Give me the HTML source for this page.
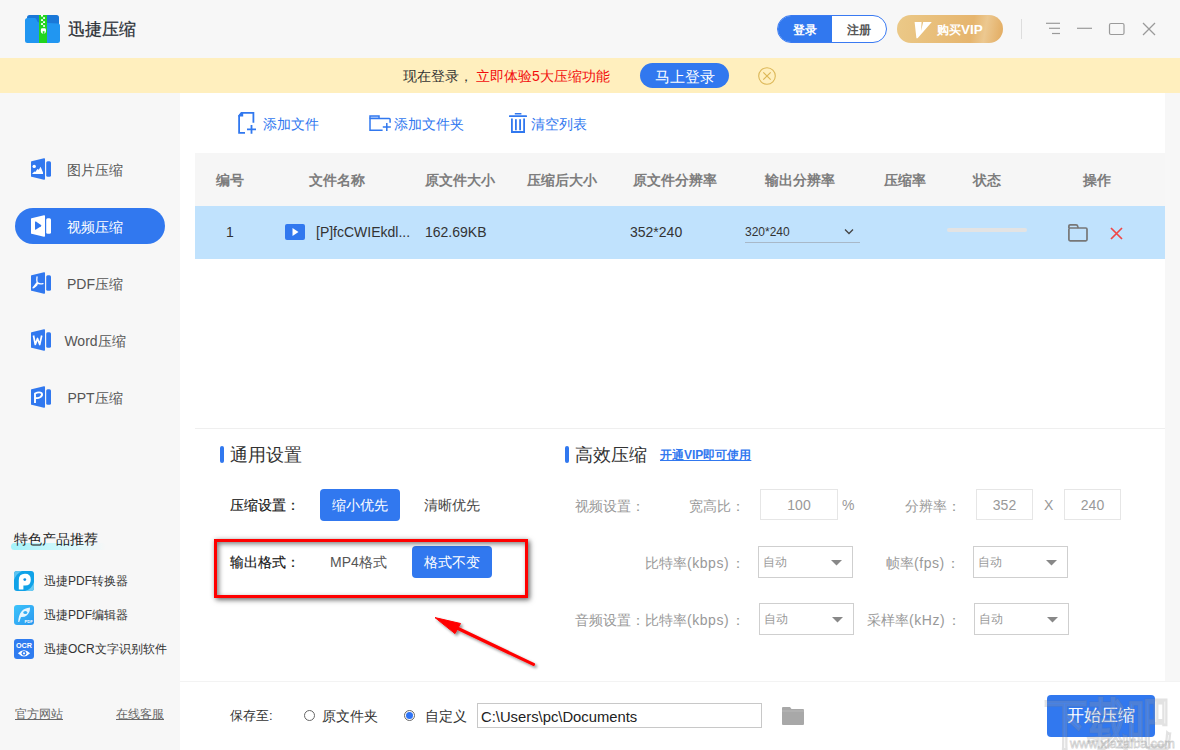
<!DOCTYPE html>
<html><head><meta charset="utf-8">
<style>
*{box-sizing:border-box;margin:0;padding:0}
html,body{width:1180px;height:750px;overflow:hidden;background:#fff;font-family:"Liberation Sans",sans-serif;}
.a{position:absolute}
.t{position:absolute;white-space:nowrap;line-height:20px;height:20px}
.c{text-align:center}
svg{position:absolute;overflow:visible}
</style></head><body>
<!-- header -->
<div class="a" style="left:0;top:0;width:1180px;height:58px;background:#f7f7f7"></div>
<div class="a" style="left:0;top:58px;width:1180px;height:35px;background:#ffefbe"></div>
<div class="a" style="left:0;top:93px;width:180px;height:657px;background:#f7f7f7"></div>
<div class="a" style="left:1165px;top:93px;width:15px;height:588px;background:#f7f7f7"></div>

<!-- logo -->
<svg style="left:25px;top:15px" width="35" height="28" viewBox="0 0 35 28">
  <rect x="2" y="0" width="32" height="11" rx="2.5" fill="#1a78d8"/>
  <path d="M0 5.5 Q0 3 2.5 3 L9.5 3 Q10.8 3 11.4 4.2 L12.4 6.4 Q13 7.3 14.2 7.4 L33 8.4 Q35 8.5 35 10.5 L35 25.5 Q35 28 32.5 28 L2.5 28 Q0 28 0 25.5 Z" fill="#2196f1"/>
  <rect x="14" y="0" width="8" height="28" fill="#22d420"/>
  <g fill="#fff"><rect x="16" y="0" width="2" height="1.6"/><rect x="18.1" y="2.2" width="1.9" height="1.7"/><rect x="16" y="4.3" width="2" height="1.6"/><rect x="18.1" y="6.3" width="1.9" height="1.7"/><rect x="16" y="8.2" width="2" height="1.7"/><rect x="18.1" y="10.2" width="1.9" height="1.6"/></g>
  <path d="M16.6 13.2 L20.2 13.2 Q21 13.4 21 15.5 Q21 18.8 18.4 18.8 Q15.8 18.8 15.8 15.5 Q15.8 13.4 16.6 13.2Z" fill="#fff"/>
  <path d="M17.6 16.2 L19.6 16.2 L19.2 18.8 L18 18.8Z" fill="#22d420"/>
</svg>
<div class="t" style="left:68px;top:18.5px;font-size:17px;line-height:22px;height:22px;color:#2a2f36;-webkit-text-stroke:0.25px #2a2f36">迅捷压缩</div>

<!-- login pill -->
<div class="a" style="left:777px;top:15px;width:110px;height:28px;border-radius:14px;border:1px solid #3a7af2;background:#fff;overflow:hidden">
  <div class="a" style="left:0;top:0;width:54px;height:26px;background:#3178ef"></div>
</div>
<div class="t c" style="left:777px;top:20px;width:56px;font-size:12px;color:#fff;font-weight:bold">登录</div>
<div class="t c" style="left:832px;top:20px;width:53px;font-size:12px;color:#555;font-weight:bold">注册</div>
<!-- VIP pill -->
<div class="a" style="left:897px;top:15px;width:106px;height:28px;border-radius:14px;background:linear-gradient(100deg,#ebc988 0%,#e6b56e 70%,#ecc890 82%,#e2aa5e 100%)"></div>
<svg style="left:914px;top:22px" width="18" height="17" viewBox="0 0 18 17"><path d="M0.6 0 L7.6 0 L7 9 L9.2 0 L17.8 0 L3.6 16.2 L2.4 16.2 Z" fill="#fff"/></svg>
<div class="t" style="left:937px;top:20px;font-size:12px;color:#fff;font-weight:bold">购买<span style="font-size:13.5px">VIP</span></div>
<!-- divider & window controls -->
<div class="a" style="left:1021px;top:19px;width:1px;height:20px;background:#ddd"></div>
<svg style="left:1040px;top:15px" width="130" height="28" viewBox="0 0 130 28">
  <g stroke="#9a9a9a" stroke-width="1.2" fill="none">
    <line x1="6" y1="8.3" x2="20" y2="8.3"/><line x1="9" y1="13.3" x2="20" y2="13.3"/><line x1="12" y1="18.5" x2="20" y2="18.5"/>
    <line x1="37" y1="13.3" x2="52" y2="13.3"/>
    <rect x="69.5" y="8.5" width="14.5" height="11" rx="1.5"/>
    <line x1="103" y1="8" x2="115" y2="20"/><line x1="115" y1="8" x2="103" y2="20"/>
  </g>
</svg>

<!-- notice -->
<div class="t" style="left:403px;top:66px;font-size:14px;color:#333">现在登录，</div>
<div class="t" style="left:476px;top:66px;font-size:14px;color:#f20c0c">立即体验5大压缩功能</div>
<div class="a" style="left:640px;top:63px;width:89px;height:25px;border-radius:12.5px;background:#3178ef"></div>
<div class="t c" style="left:640px;top:66.5px;width:89px;font-size:15px;color:#fff">马上登录</div>
<svg style="left:758px;top:67px" width="18" height="18" viewBox="0 0 18 18"><circle cx="9" cy="9" r="8.3" fill="none" stroke="#dcb757" stroke-width="1.1"/><path d="M5.3 5.3 L12.7 12.7 M12.7 5.3 L5.3 12.7" stroke="#dcb757" stroke-width="1.2"/></svg>


<!-- sidebar -->
<div class="a" style="left:15px;top:208px;width:150px;height:36px;border-radius:18px;background:#3178ef"></div>
<svg style="left:31px;top:158px" width="20" height="22" viewBox="0 0 20 22">
  <path d="M0.5 3.2 L13 0.3 Q14 0.1 14 1 L14 21 Q14 21.9 13 21.7 L0.5 18.8 Q0 18.7 0 18.2 L0 3.8 Q0 3.3 0.5 3.2Z" fill="#3178ef"/>
  <rect x="15.2" y="3.2" width="4.8" height="15.6" rx="1.5" fill="#3178ef"/>
  <circle cx="3.2" cy="8.4" r="1.7" fill="#fff"/>
  <path d="M1 15.9 L3.3 13.6 L4.3 14 L6.4 11.1 L7.8 11.8 L9.6 8.8 L12 14.4 L12 15.9 Z" fill="#fff"/>
</svg>
<svg style="left:31px;top:215px" width="20" height="22" viewBox="0 0 20 22">
  <path d="M0.5 3.2 L13 0.3 Q14 0.1 14 1 L14 21 Q14 21.9 13 21.7 L0.5 18.8 Q0 18.7 0 18.2 L0 3.8 Q0 3.3 0.5 3.2Z" fill="#fff"/>
  <rect x="15.2" y="3.2" width="4.8" height="15.6" rx="1.5" fill="#fff"/>
  <path d="M4 7 Q4 6 5 6.6 L10 10 Q10.8 10.6 10 11.2 L5 14.5 Q4 15.1 4 14 Z" fill="#3178ef"/>
</svg>
<svg style="left:31px;top:272px" width="20" height="22" viewBox="0 0 20 22">
  <path d="M0.5 3.2 L13 0.3 Q14 0.1 14 1 L14 21 Q14 21.9 13 21.7 L0.5 18.8 Q0 18.7 0 18.2 L0 3.8 Q0 3.3 0.5 3.2Z" fill="#3178ef"/>
  <rect x="15.2" y="3.2" width="4.8" height="15.6" rx="1.5" fill="#3178ef"/>
  <path d="M6 5 Q5.5 8 6.2 10.5 L2 15.8 M6.2 10.5 Q8 12.5 12 11.6 M6.2 10.5 Q7 13 3 15.5" stroke="#fff" stroke-width="1.3" fill="none" stroke-linecap="round"/>
</svg>
<svg style="left:31px;top:329px" width="20" height="22" viewBox="0 0 20 22">
  <path d="M0.5 3.2 L13 0.3 Q14 0.1 14 1 L14 21 Q14 21.9 13 21.7 L0.5 18.8 Q0 18.7 0 18.2 L0 3.8 Q0 3.3 0.5 3.2Z" fill="#3178ef"/>
  <rect x="15.2" y="3.2" width="4.8" height="15.6" rx="1.5" fill="#3178ef"/>
  <path d="M2.5 6.5 L4.3 15.5 L6.5 9.5 L8.7 15.5 L10.7 6.5" stroke="#fff" stroke-width="1.7" fill="none" stroke-linejoin="round"/>
</svg>
<svg style="left:31px;top:386px" width="20" height="22" viewBox="0 0 20 22">
  <path d="M0.5 3.2 L13 0.3 Q14 0.1 14 1 L14 21 Q14 21.9 13 21.7 L0.5 18.8 Q0 18.7 0 18.2 L0 3.8 Q0 3.3 0.5 3.2Z" fill="#3178ef"/>
  <rect x="15.2" y="3.2" width="4.8" height="15.6" rx="1.5" fill="#3178ef"/>
  <path d="M4 17 L4 7.5 Q8 5.5 10.5 7 Q12 9 9.5 11 Q7 12.5 5 12" stroke="#fff" stroke-width="1.9" fill="none" stroke-linejoin="round"/>
</svg>
<div class="t c" style="left:45px;top:160px;width:100px;font-size:14px;color:#555">图片压缩</div>
<div class="t c" style="left:45px;top:217px;width:100px;font-size:14px;color:#fff">视频压缩</div>
<div class="t c" style="left:45px;top:274px;width:100px;font-size:14px;color:#555">PDF压缩</div>
<div class="t c" style="left:45px;top:331px;width:100px;font-size:14px;color:#555">Word压缩</div>
<div class="t c" style="left:45px;top:388px;width:100px;font-size:14px;color:#555">PPT压缩</div>

<div class="a" style="left:11px;top:543px;width:95px;height:7px;border-radius:3.5px;background:linear-gradient(90deg,#a4f3fb,rgba(200,250,255,0.5) 70%,rgba(247,247,247,0))"></div>
<div class="t" style="left:14px;top:529px;font-size:14px;color:#222">特色产品推荐</div>
<svg style="left:14px;top:571px" width="20" height="20" viewBox="0 0 20 20">
  <rect width="20" height="20" rx="3" fill="#10a2e8"/>
  <path d="M0 3 Q0 0 3 0 L8 0 Q2 3 0 9 Z" fill="#5cc3f0"/>
  <path d="M20 11 Q18 18 11 20 L17 20 Q20 20 20 17 Z" fill="#6ccbf2"/>
  <path d="M4.8 18.6 L4.8 9 Q4.8 2.8 11 2.8 Q16.8 2.8 16.8 8.7 Q16.8 14.6 11 14.6 L9.4 14.6 L9.4 18.6 Z" fill="#fff"/>
  <circle cx="10.8" cy="8.6" r="1.4" fill="#0f8fe2"/>
</svg>
<svg style="left:14px;top:605px" width="20" height="20" viewBox="0 0 20 20">
  <defs><linearGradient id="pe" x1="0" y1="0" x2="1" y2="1"><stop offset="0" stop-color="#3cc4fb"/><stop offset="1" stop-color="#2b98ef"/></linearGradient></defs>
  <rect width="20" height="20" rx="3" fill="url(#pe)"/>
  <path d="M4.2 17 Q4.5 10 7.5 6.5 Q10.5 3 16 2.6 Q16.2 7.5 13 10.2 Q10.5 12.3 7 12 L5.2 17 Z" fill="#fff" opacity="0.88"/>
  <ellipse cx="11.3" cy="7.4" rx="2" ry="1.5" fill="#34aef4"/>
  <text x="10.5" y="17.5" font-size="4.2" fill="#fff" font-family="Liberation Sans" font-weight="bold">PDF</text>
</svg>
<svg style="left:14px;top:639px" width="20" height="20" viewBox="0 0 20 20">
  <rect width="20" height="20" rx="3" fill="#2f7cf0"/>
  <text x="10" y="8.6" font-size="6.6" fill="#fff" font-family="Liberation Sans" font-weight="bold" text-anchor="middle" textLength="16" lengthAdjust="spacingAndGlyphs">OCR</text>
  <path d="M3.9 14.3 Q10 8 16.1 14.3 Q10 20.6 3.9 14.3Z" fill="#fff"/>
  <circle cx="10" cy="14.3" r="2.4" fill="#2f7cf0"/><circle cx="10" cy="14.3" r="1.1" fill="#fff"/>
</svg>
<div class="t" style="left:44px;top:570.5px;font-size:12px;color:#333">迅捷PDF转换器</div>
<div class="t" style="left:44px;top:604.5px;font-size:12px;color:#333">迅捷PDF编辑器</div>
<div class="t" style="left:44px;top:638.5px;font-size:12px;color:#333">迅捷OCR文字识别软件</div>
<div class="t" style="left:15px;top:704px;font-size:12px;color:#666;text-decoration:underline">官方网站</div>
<div class="t" style="left:116px;top:704px;font-size:12px;color:#666;text-decoration:underline">在线客服</div>

<!-- toolbar -->
<svg style="left:237px;top:112px" width="20" height="23" viewBox="0 0 20 23">
  <path d="M8 20.9 L2.1 20.9 L2.1 4 L4.6 0.9 L16.4 0.9 L16.4 10.8" fill="none" stroke="#3178ef" stroke-width="1.8"/>
  <path d="M1.2 3.6 L4.2 0 L6.2 0 L6.2 4.6 L1.2 4.6 Z" fill="#3178ef"/>
  <path d="M10 17.3 L19 17.3 M14.5 13 L14.5 21.8" stroke="#3178ef" stroke-width="1.8"/>
</svg>
<div class="t" style="left:263px;top:114px;font-size:14px;color:#3178ef">添加文件</div>
<svg style="left:368px;top:114px" width="24" height="18" viewBox="0 0 24 18">
  <rect x="2.7" y="2.5" width="7.6" height="1.5" fill="#b9d0f9"/>
  <path d="M2 4.5 L2 1.9 L11 1.9 L11 4.5" fill="none" stroke="#3178ef" stroke-width="1.5"/>
  <path d="M14.6 16.3 L2 16.3 L2 4.5 L21.3 4.5 Q22.1 4.5 22.1 5.3 L22.1 8.8" fill="none" stroke="#3178ef" stroke-width="1.5"/>
  <path d="M14.8 13.1 L22.8 13.1 M18.8 9 L18.8 17" stroke="#3178ef" stroke-width="1.5"/>
</svg>
<div class="t" style="left:394px;top:114px;font-size:14px;color:#3178ef">添加文件夹</div>
<svg style="left:508px;top:112px" width="20" height="22" viewBox="0 0 20 22">
  <rect x="6.8" y="1" width="6.6" height="1.5" fill="#3178ef"/>
  <rect x="1" y="3.2" width="18" height="1.8" rx="0.6" fill="#3178ef"/>
  <path d="M3.9 6.4 L3.9 20 L16.1 20 L16.1 6.4" fill="none" stroke="#3178ef" stroke-width="1.8"/>
  <path d="M7.9 7.2 L7.9 18.2 M12.1 7.2 L12.1 18.2" stroke="#3178ef" stroke-width="1.8"/>
</svg>
<div class="t" style="left:531px;top:114px;font-size:14px;color:#3178ef">清空列表</div>

<!-- table -->
<div class="a" style="left:195px;top:153px;width:970px;height:53px;background:#f6f6f6"></div>
<div class="a" style="left:195px;top:206px;width:970px;height:53px;background:#c0e2fd"></div>
<div class="t c" style="left:180px;top:170px;width:100px;font-size:14px;color:#7d7d7d;font-weight:bold">编号</div>
<div class="t c" style="left:287px;top:170px;width:100px;font-size:14px;color:#7d7d7d;font-weight:bold">文件名称</div>
<div class="t c" style="left:410px;top:170px;width:100px;font-size:14px;color:#7d7d7d;font-weight:bold">原文件大小</div>
<div class="t c" style="left:512px;top:170px;width:100px;font-size:14px;color:#7d7d7d;font-weight:bold">压缩后大小</div>
<div class="t c" style="left:625px;top:170px;width:100px;font-size:14px;color:#7d7d7d;font-weight:bold">原文件分辨率</div>
<div class="t c" style="left:750px;top:170px;width:100px;font-size:14px;color:#7d7d7d;font-weight:bold">输出分辨率</div>
<div class="t c" style="left:855px;top:170px;width:100px;font-size:14px;color:#7d7d7d;font-weight:bold">压缩率</div>
<div class="t c" style="left:937px;top:170px;width:100px;font-size:14px;color:#7d7d7d;font-weight:bold">状态</div>
<div class="t c" style="left:1047px;top:170px;width:100px;font-size:14px;color:#7d7d7d;font-weight:bold">操作</div>

<div class="t" style="left:226px;top:222px;font-size:14px;color:#333">1</div>
<svg style="left:285px;top:224px" width="20" height="16" viewBox="0 0 20 16"><rect width="20" height="16" rx="2" fill="#3178ef"/><path d="M7.5 4 L13.5 8 L7.5 12 Z" fill="#fff"/></svg>
<div class="t" style="left:316px;top:222px;font-size:14px;color:#333">[P]fcCWIEkdl...</div>
<div class="t" style="left:425px;top:222px;font-size:14px;color:#333">162.69KB</div>
<div class="t" style="left:630px;top:222px;font-size:14px;color:#333">352*240</div>
<div class="t" style="left:745px;top:222px;font-size:12px;color:#333">320*240</div>
<div class="a" style="left:745px;top:242px;width:115px;height:1px;background:#a8b8c8"></div>
<svg style="left:844px;top:228px" width="10" height="7" viewBox="0 0 10 7"><path d="M1 1.5 L5 5.5 L9 1.5" fill="none" stroke="#444" stroke-width="1.3"/></svg>
<div class="a" style="left:947px;top:228px;width:80px;height:4px;border-radius:2px;background:#e3e3e3"></div>
<svg style="left:1068px;top:224px" width="21" height="18" viewBox="0 0 21 18"><rect x="0.9" y="4" width="18.1" height="12.8" rx="1.2" fill="none" stroke="#777" stroke-width="1.7"/><path d="M0.9 4 L0.9 2.2 Q0.9 0.9 2.2 0.9 L8 0.9 Q9.5 0.9 9.8 2.5 L10.2 4" fill="none" stroke="#777" stroke-width="1.7"/></svg>
<svg style="left:1110px;top:227px" width="13" height="13" viewBox="0 0 13 13"><path d="M1 1 L12 12 M12 1 L1 12" stroke="#f04646" stroke-width="1.7"/></svg>

<div class="a" style="left:195px;top:428px;width:970px;height:1px;background:#efefef"></div>
<div class="a" style="left:180px;top:681px;width:1000px;height:1px;background:#f3f3f3"></div>

<!-- general settings -->
<div class="a" style="left:220px;top:446px;width:4px;height:17px;border-radius:2px;background:#3178ef"></div>
<div class="t" style="left:230px;top:443px;font-size:18px;line-height:24px;height:24px;color:#333">通用设置</div>
<div class="t" style="left:230px;top:495px;font-size:14px;color:#151515;-webkit-text-stroke:0.15px #151515">压缩设置：</div>
<div class="a" style="left:320px;top:489px;width:80px;height:32px;border-radius:4px;background:#3178ef"></div>
<div class="t c" style="left:320px;top:495px;width:80px;font-size:14px;color:#fff">缩小优先</div>
<div class="t" style="left:424px;top:495px;font-size:14px;color:#444">清晰优先</div>
<div class="t" style="left:230px;top:552px;font-size:14px;color:#151515;-webkit-text-stroke:0.15px #151515">输出格式：</div>
<div class="t" style="left:330px;top:552px;font-size:14px;color:#555">MP4格式</div>
<div class="a" style="left:412px;top:546px;width:80px;height:32px;border-radius:4px;background:#3178ef"></div>
<div class="t c" style="left:412px;top:552px;width:80px;font-size:14px;color:#fff">格式不变</div>

<!-- red annotation -->
<div class="a" style="left:214px;top:539px;width:314px;height:59px;border:3px solid #ff0000;box-shadow:2px 2px 5px rgba(0,0,0,0.55), 0 0 5px rgba(0,0,0,0.12), inset 2px 2px 5px rgba(0,0,0,0.5)"></div>
<svg style="left:0;top:0" width="1180" height="750" viewBox="0 0 1180 750">
  <defs><filter id="sh" x="-20%" y="-20%" width="140%" height="140%"><feGaussianBlur in="SourceAlpha" stdDeviation="1.8"/><feOffset dx="2" dy="2"/><feComponentTransfer><feFuncA type="linear" slope="0.45"/></feComponentTransfer><feMerge><feMergeNode/><feMergeNode in="SourceGraphic"/></feMerge></filter></defs>
  <g filter="url(#sh)">
    <path d="M457 628 L533.5 664.4" stroke="#ff0000" stroke-width="3.2" stroke-linecap="round"/>
    <path d="M435 617.6 L460.5 623.5 L455 633.6 Z" fill="#ff0000" stroke="#ff0000" stroke-width="1" stroke-linejoin="round"/>
  </g>
</svg>

<!-- advanced -->
<div class="a" style="left:565px;top:446px;width:4px;height:17px;border-radius:2px;background:#3178ef"></div>
<div class="t" style="left:575px;top:443px;font-size:18px;line-height:24px;height:24px;color:#333">高效压缩</div>
<div class="t" style="left:660px;top:445px;font-size:12px;color:#3178ef;font-weight:bold;text-decoration:underline">开通VIP即可使用</div>
<div class="t" style="left:575px;top:496px;font-size:14px;color:#999">视频设置：</div>
<div class="t" style="left:689px;top:496px;font-size:14px;color:#999">宽高比：</div>
<div class="a" style="left:760px;top:489px;width:78px;height:31px;border:1px solid #e6e6e6"></div>
<div class="t c" style="left:760px;top:495px;width:78px;font-size:14px;color:#999">100</div>
<div class="t" style="left:842px;top:495px;font-size:14px;color:#999">%</div>
<div class="t" style="left:905px;top:496px;font-size:14px;color:#999">分辨率：</div>
<div class="a" style="left:976px;top:489px;width:57px;height:31px;border:1px solid #e6e6e6"></div>
<div class="t c" style="left:976px;top:495px;width:57px;font-size:14px;color:#999">352</div>
<div class="t" style="left:1044px;top:495px;font-size:14px;color:#999">X</div>
<div class="a" style="left:1064px;top:489px;width:57px;height:31px;border:1px solid #e6e6e6"></div>
<div class="t c" style="left:1064px;top:495px;width:57px;font-size:14px;color:#999">240</div>

<div class="t" style="left:645px;top:553px;font-size:14px;color:#999">比特率<span style="letter-spacing:0.55px">(kbps)</span><span style="margin-left:1.5px">：</span></div>
<div class="t" style="left:886px;top:553px;font-size:14px;color:#999">帧率<span style="letter-spacing:0.55px">(fps)</span><span style="margin-left:1.5px">：</span></div>
<div class="t" style="left:575px;top:610px;font-size:14px;color:#999">音频设置：比特率<span style="letter-spacing:0.55px">(kbps)</span><span style="margin-left:1.5px">：</span></div>
<div class="t" style="left:867px;top:610px;font-size:14px;color:#999">采样率<span style="letter-spacing:0.55px">(kHz)</span><span style="margin-left:1.5px">：</span></div>
<div class="a" style="left:758px;top:546px;width:95px;height:32px;border:1px solid #cfcfcf;background:#fff"></div>
<div class="t" style="left:763px;top:552px;font-size:12px;color:#999">自动</div>
<svg style="left:831px;top:560px" width="11" height="6" viewBox="0 0 11 6"><path d="M0 0 L11 0 L5.5 5.5 Z" fill="#888"/></svg>
<div class="a" style="left:973px;top:546px;width:95px;height:32px;border:1px solid #cfcfcf;background:#fff"></div>
<div class="t" style="left:978px;top:552px;font-size:12px;color:#999">自动</div>
<svg style="left:1046px;top:560px" width="11" height="6" viewBox="0 0 11 6"><path d="M0 0 L11 0 L5.5 5.5 Z" fill="#888"/></svg>
<div class="a" style="left:759px;top:603px;width:95px;height:32px;border:1px solid #cfcfcf;background:#fff"></div>
<div class="t" style="left:764px;top:609px;font-size:12px;color:#999">自动</div>
<svg style="left:832px;top:617px" width="11" height="6" viewBox="0 0 11 6"><path d="M0 0 L11 0 L5.5 5.5 Z" fill="#888"/></svg>
<div class="a" style="left:974px;top:603px;width:95px;height:32px;border:1px solid #cfcfcf;background:#fff"></div>
<div class="t" style="left:979px;top:609px;font-size:12px;color:#999">自动</div>
<svg style="left:1047px;top:617px" width="11" height="6" viewBox="0 0 11 6"><path d="M0 0 L11 0 L5.5 5.5 Z" fill="#888"/></svg>

<!-- bottom bar -->
<div class="t" style="left:230px;top:706px;font-size:13px;color:#333">保存至:</div>
<div class="a" style="left:304px;top:710px;width:11px;height:11px;border-radius:50%;border:1px solid #666;background:#fff"></div>
<div class="t" style="left:322px;top:706px;font-size:14px;color:#333">原文件夹</div>
<div class="a" style="left:404px;top:710px;width:11px;height:11px;border-radius:50%;border:1px solid #666;background:#fff"></div>
<div class="a" style="left:406px;top:712px;width:7px;height:7px;border-radius:50%;background:#2f74f5"></div>
<div class="t" style="left:425px;top:706px;font-size:14px;color:#333">自定义</div>
<div class="a" style="left:477px;top:703px;width:285px;height:25px;border:1px solid #c8c8c8;background:#fff"></div>
<div class="t" style="left:481px;top:706.5px;font-size:14.8px;color:#222">C:\Users\pc\Documents</div>
<svg style="left:782px;top:707px" width="22" height="18" viewBox="0 0 22 18"><path d="M0 1 Q0 0 1 0 L8 0 L9.5 2 L21 2 Q22 2 22 3 L22 17 Q22 18 21 18 L1 18 Q0 18 0 17 Z" fill="#a8a8a8"/><path d="M0 4 L22 4" stroke="#bdbdbd" stroke-width="0.8"/></svg>
<div class="a" style="left:1047px;top:695px;width:108px;height:42px;border-radius:4px;background:#3178ef"></div>
<div class="t c" style="left:1047px;top:706px;width:108px;font-size:17px;color:#fff">开始压缩</div>

<!-- watermark -->
<svg style="left:1040px;top:685px" width="140" height="65" viewBox="0 0 140 65">
  <g transform="translate(5,58) scale(0.93,1.2)">
    <text x="0" y="0" font-family="Liberation Sans" font-size="46" font-weight="bold" fill="rgba(255,255,255,0.1)" stroke="rgba(110,110,110,0.2)" stroke-width="1" letter-spacing="-1">下载吧</text>
  </g>
  <text x="30" y="63" font-family="Liberation Sans" font-size="13" fill="rgba(255,255,255,0.2)" stroke="rgba(120,120,120,0.35)" stroke-width="0.8" textLength="105" lengthAdjust="spacingAndGlyphs">www.xiazaiba.com</text>
</svg>
</body></html>
